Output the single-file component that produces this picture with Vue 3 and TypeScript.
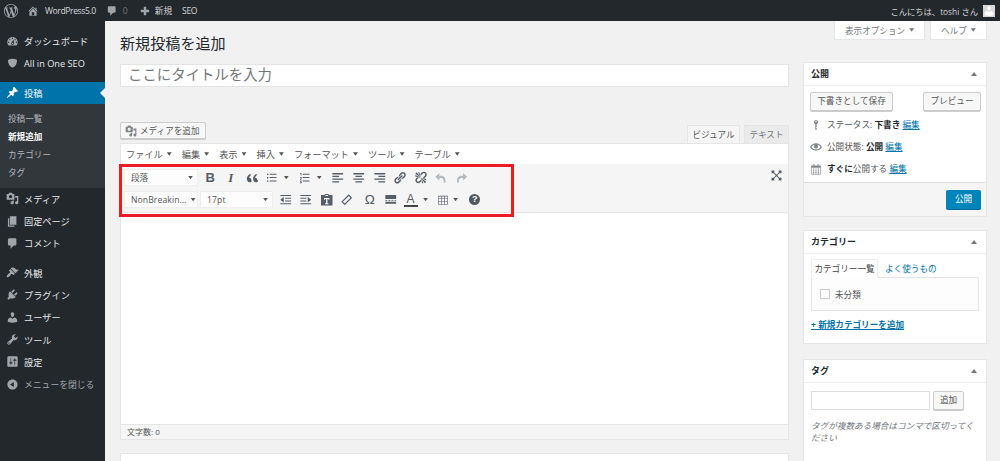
<script setup lang="ts">
const D: Record<string, string> = {
  wp: 'M20 10c0-5.51-4.49-10-10-10C4.48 0 0 4.49 0 10c0 5.52 4.48 10 10 10 5.51 0 10-4.48 10-10zM7.78 15.37L4.37 6.22c.55-.02 1.17-.08 1.17-.08.5-.06.44-1.13-.06-1.11 0 0-1.45.11-2.37.11-.18 0-.37 0-.58-.01C4.12 2.69 6.87 1.11 10 1.11c2.33 0 4.45.87 6.05 2.34-.68-.11-1.65.39-1.65 1.58 0 .74.45 1.36.9 2.1.35.61.55 1.36.55 2.46 0 1.49-1.4 5-1.4 5l-3.03-8.37c.54-.02.82-.17.82-.17.5-.05.44-1.25-.06-1.22 0 0-1.44.12-2.38.12-.87 0-2.33-.12-2.33-.12-.5-.03-.56 1.2-.06 1.22l.92.08 1.26 3.41zM17.41 10c.24-.64.74-1.87.43-4.25.7 1.29 1.05 2.71 1.05 4.25 0 3.29-1.73 6.24-4.4 7.78.97-2.59 1.94-5.2 2.92-7.78zM6.1 18.09C3.12 16.65 1.11 13.53 1.11 10c0-1.3.23-2.48.72-3.59C3.25 10.3 4.67 14.2 6.1 18.09zm4.03-6.63l2.58 6.98c-.86.29-1.76.45-2.71.45-.79 0-1.57-.11-2.29-.33.81-2.38 1.62-4.74 2.42-7.1z',
  home: 'M16 8.5l1.53 1.53-1.06 1.06L10 4.62l-6.47 6.47-1.06-1.06L10 2.5l4 4v-2h2v4zm-6-2.46l6 5.99V18H4v-5.97zM12 17v-5H8v5h4z',
  comment: 'M5 2h9c1.1 0 2 .9 2 2v7c0 1.1-.9 2-2 2h-2l-5 5v-5H5c-1.1 0-2-.9-2-2V4c0-1.1.9-2 2-2z',
  plus: 'M17 8v4h-5v5H8v-5H3V8h5V3h4v5h5z',
  dashboard: 'M3.76 16h12.48c1.1-1.37 1.76-3.11 1.76-5 0-4.42-3.58-8-8-8s-8 3.58-8 8c0 1.89.66 3.63 1.76 5zM10 4c.55 0 1 .45 1 1s-.45 1-1 1-1-.45-1-1 .45-1 1-1zM6 6c.55 0 1 .45 1 1s-.45 1-1 1-1-.45-1-1 .45-1 1-1zm8 0c.55 0 1 .45 1 1s-.45 1-1 1-1-.45-1-1 .45-1 1-1zm-5.37 5.55L12 7v6c0 1.1-.9 2-2 2s-2-.9-2-2c0-.57.24-1.08.63-1.45zM4 10c.55 0 1 .45 1 1s-.45 1-1 1-1-.45-1-1 .45-1 1-1zm12 0c.55 0 1 .45 1 1s-.45 1-1 1-1-.45-1-1 .45-1 1-1zm-5 3c0-.55-.45-1-1-1s-1 .45-1 1 .45 1 1 1 1-.45 1-1z',
  shield: 'M3 4.500c2-1.200 4.500-1.800 7-1.800s5 .6 7 1.800c0 5.500-2 9.500-7 12-5-2.500-7-6.500-7-12z',
  pin: 'M10.44 3.02l1.82-1.82 6.36 6.35-1.83 1.82c-1.05-.68-2.48-.57-3.41.36l-.75.75c-.92.93-1.04 2.35-.35 3.41l-1.83 1.82-2.41-2.41-2.8 2.79c-.42.42-3.38 2.71-3.8 2.29s1.86-3.39 2.28-3.81l2.79-2.79L4.1 9.36l1.83-1.82c1.05.69 2.48.57 3.4-.36l.75-.75c.93-.92 1.05-2.35.36-3.41z',
  media: 'M13 11V4c0-.55-.45-1-1-1h-1.67L9 1H5L3.67 3H2c-.55 0-1 .45-1 1v7c0 .55.45 1 1 1h10c.55 0 1-.45 1-1zM7 4.500c1.380 0 2.500 1.120 2.500 2.500S8.380 9.500 7 9.500 4.500 8.380 4.500 7 5.620 4.500 7 4.500zM14 6h5v10.500c0 1.380-1.120 2.500-2.500 2.500S14 17.880 14 16.500s1.120-2.500 2.500-2.500c.17 0 .34.02.5.05V9h-3V6zm-4 8.050V13h2v3.500c0 1.380-1.120 2.500-2.500 2.500S7 17.880 7 16.500 8.120 14 9.500 14c.17 0 .34.02.5.05z',
  page: 'M6 15V2h10v13H6zm-1 1h8v2H3V5h2v11z',
  appearance: 'M14.480 11.060L7.410 3.990l1.500-1.500c.5-.56 2.300-.47 3.510.32 1.210.8 1.430 1.280 2.910 2.100 1.180.64 2.450 1.260 4.450.85zm-.71.71L6.700 4.700 4.930 6.470c-.39.39-.39 1.020 0 1.410l1.060 1.060c.39.39.39 1.030 0 1.420-.6.6-1.430 1.110-2.210 1.690-.35.26-.7.53-1.010.84C1.430 14.230.4 16.080 1.400 17.070c.99 1 2.840-.03 4.180-1.360.31-.31.58-.66.85-1.020.57-.78 1.080-1.610 1.690-2.210.39-.39 1.020-.39 1.410 0l1.060 1.060c.39.39 1.020.39 1.410 0z',
  plugin: 'M13.110 4.360L9.870 7.600 8 5.730l3.240-3.240c.35-.34 1.050-.2 1.560.32.52.51.66 1.210.31 1.550zm-8 1.770l.91-1.120 9.010 9.010-1.190.84c-.71.71-2.630 1.160-3.820 1.160H6.140L4.900 17.260c-.59.59-1.540.59-2.120 0-.59-.58-.59-1.530 0-2.120l1.240-1.240v-3.880c0-1.130.4-3.190 1.090-3.890zm7.260 3.970l3.240-3.240c.34-.35 1.040-.21 1.550.31.52.51.66 1.210.31 1.550l-3.240 3.250z',
  user: 'M10 9.250c-2.270 0-2.730-3.440-2.730-3.440C7 4.020 7.820 2 9.970 2c2.160 0 2.980 2.020 2.710 3.810 0 0-.41 3.440-2.680 3.440zm0 2.570L12.720 10c2.390 0 4.520 2.330 4.520 4.530v2.490s-3.650 1.130-7.240 1.130c-3.650 0-7.240-1.130-7.240-1.130v-2.490c0-2.250 1.940-4.480 4.470-4.480z',
  tool: 'M16.680 9.770c-1.340 1.340-3.300 1.670-4.950.99l-5.410 6.520c-.99.99-2.590.99-3.580 0s-.99-2.590 0-3.570l6.520-5.420c-.68-1.650-.35-3.610.99-4.950 1.280-1.280 3.120-1.620 4.720-1.060l-2.890 2.890 2.820 2.820 2.860-2.870c.53 1.580.18 3.390-1.080 4.650zM3.810 16.210c.4.39 1.040.39 1.430 0 .4-.4.4-1.040 0-1.430-.39-.4-1.030-.4-1.430 0-.39.39-.39 1.030 0 1.430z',
  settings: 'M18 16V4c0-1.100-.9-2-2-2H4c-1.100 0-2 .9-2 2v12c0 1.100.9 2 2 2h12c1.100 0 2-.9 2-2zM8 11h1c.55 0 1 .45 1 1s-.45 1-1 1H8v1.500c0 .28-.22.5-.5.5s-.5-.22-.5-.5V13H6c-.55 0-1-.45-1-1s.45-1 1-1h1V5.500c0-.28.22-.5.5-.5s.5.22.5.5V11zm5-2h-1c-.55 0-1-.45-1-1s.45-1 1-1h1V5.500c0-.28.22-.5.5-.5s.5.22.5.5V7h1c.55 0 1 .45 1 1s-.45 1-1 1h-1v5.500c0 .28-.22.5-.5.5s-.5-.22-.5-.5V9z',
  collapse: 'M10 2.160c4.330 0 7.840 3.510 7.840 7.840s-3.510 7.840-7.840 7.840S2.160 14.330 2.160 10 5.710 2.160 10 2.160zm2 11.720V6.120L6.180 9.970z',
  key: 'M10 1.500C8 1.500 6.500 3 6.500 5c0 1.600 1 3 2.300 3.400V17l1.200 1.800 1.200-1.800v-2h-1v-1.500h1V8.400c1.300-.4 2.300-1.800 2.300-3.400 0-2-1.500-3.500-3.500-3.500zM10 3c.7 0 1.200.5 1.200 1.200S10.700 5.400 10 5.400s-1.200-.5-1.200-1.200S9.300 3 10 3z',
  eye: 'M19.700 9.400C17.700 6 14 3.900 10 3.900S2.300 6 .3 9.400L0 10l.3.6c2 3.400 5.700 5.500 9.700 5.500s7.700-2.100 9.700-5.500l.3-.6-.3-.6zM10 14.100c-3.100 0-6-1.600-7.700-4.100C3.600 8 5.700 6.600 8 6.100c-.9.6-1.500 1.700-1.500 2.900 0 1.900 1.600 3.500 3.500 3.500s3.500-1.600 3.500-3.500c0-1.200-.6-2.300-1.500-2.900 2.300.5 4.400 1.900 5.700 3.900-1.700 2.500-4.600 4.100-7.700 4.100z',
  calendar: 'M15 4h3v15H2V4h3V3c0-.41.15-.76.44-1.060.29-.29.65-.44 1.060-.44s.77.15 1.060.44c.29.3.44.65.44 1.060v1h4V3c0-.41.15-.76.44-1.060.29-.29.65-.44 1.060-.44s.77.15 1.060.44c.29.3.44.65.44 1.060v1zM6 5h1V3c0-.14-.05-.26-.15-.35-.09-.1-.21-.15-.35-.15s-.26.05-.35.15c-.1.09-.15.21-.15.35v2zm7 0h1V3c0-.14-.05-.26-.15-.35-.09-.1-.21-.15-.35-.15s-.26.05-.35.15c-.1.09-.15.21-.15.35v2zm4 13V8H3v10h14zM7 9v2H5V9h2zm2 0h2v2H9V9zm4 2V9h2v2h-2zm-6 1v2H5v-2h2zm2 0h2v2H9v-2zm4 2v-2h2v2h-2zm-6 1v2H5v-2h2zm4 2H9v-2h2v2zm4 0h-2v-2h2v2z',
  quote: 'M9.490 13.220c0-.74-.2-1.380-.61-1.900-.62-.78-1.830-.88-2.530-.72-.29-1.650 1.110-3.750 2.920-4.650L7.400 4.270c-2.590 1.270-5.110 4.510-4.660 8.020.29 2.260 1.350 4.440 4.180 4.440 1.160 0 1.860-.38 2.460-.95.48-.56.11-1.500.11-2.560zm8.740 0c0-.74-.2-1.380-.61-1.900-.63-.78-1.830-.88-2.530-.72-.29-1.650 1.110-3.750 2.920-4.650l-1.370-1.680c-2.590 1.270-5.100 4.510-4.650 8.020.29 2.260 1.350 4.440 4.170 4.440 1.160 0 1.860-.38 2.460-.95.48-.56.61-1.500.61-2.560z',
  ul: 'M3 4h2v2H3zM7 4h10v1.500H7zM3 9h2v2H3zM7 9h10v1.500H7zM3 14h2v2H3zM7 14h10v1.500H7z',
  ol: 'M3 3h2v3.500H4V4H3zM7 4h10v1.500H7zM3 9h2.500v2.500H4V13h1.500v1H3v-3h1.500v-1H3zM7 9h10v1.500H7zM3 15h2.500v3H3v-1h1.500v-.5H3zM7 14h10v1.500H7z',
  left: 'M2 3h16v2H2zM2 7h10v2H2zM2 11h16v2H2zM2 15h10v2H2z',
  center: 'M2 3h16v2H2zM5 7h10v2H5zM2 11h16v2H2zM5 15h10v2H5z',
  right: 'M2 3h16v2H2zM8 7h10v2H8zM2 11h16v2H2zM8 15h10v2H8z',
  link: 'M17.740 2.760c1.680 1.690 1.680 4.410 0 6.100l-1.530 1.520c-1.120 1.120-2.700 1.470-4.140 1.090l2.620-2.610.76-.77.76-.76c.84-.84.84-2.200 0-3.040-.84-.85-2.200-.85-3.040 0l-.77.76-3.380 3.380c-.37-1.440-.02-3.020 1.100-4.140l1.520-1.530c1.690-1.680 4.420-1.680 6.100 0zM8.590 13.430l5.340-5.340c.42-.42.42-1.100 0-1.520-.44-.43-1.130-.39-1.530 0l-5.330 5.340c-.42.42-.42 1.100 0 1.520.44.43 1.130.39 1.520 0zm-.76 2.290l4.140-4.150c.38 1.440.03 3.020-1.090 4.140l-1.520 1.530c-1.690 1.680-4.410 1.680-6.100 0-1.680-1.680-1.680-4.420 0-6.100l1.530-1.520c1.120-1.120 2.700-1.470 4.140-1.100l-4.140 4.150c-.85.84-.85 2.200 0 3.050.84.84 2.200.84 3.040 0z',
  unlink: 'M17.740 2.260c1.680 1.690 1.680 4.410 0 6.100l-1.530 1.520c-.32.33-.69.58-1.080.77L13 10l1.690-1.640.76-.77.76-.76c.84-.84.84-2.200 0-3.040-.84-.85-2.200-.85-3.040 0l-.77.76-.76.76L10 7l-.65-2.140c.19-.38.44-.75.77-1.070l1.520-1.530c1.690-1.680 4.420-1.680 6.100 0zM2 4l8 6-6-8zm4-2l4 8-2-8H6zM2 6l8 4-8-2V6zm7.360 7.690L10 13l.74 2.350-1.380 1.390c-1.690 1.680-4.410 1.680-6.100 0-1.680-1.680-1.680-4.420 0-6.100l1.390-1.380L7 10l-.69.64-1.520 1.530c-.85.84-.85 2.200 0 3.040.84.85 2.200.85 3.040 0zM18 16l-8-6 6 8zm-4 2l-4-8 2 8h2zm4-4l-8-4 8 2v2z',
  undo: 'M8 3L2 8.500 8 14v-3.500h2c3 0 4.500 2 4.500 6.500H17c.5-6-1.500-10-7-10H8z',
  redo: 'M12 3l6 5.500L12 14v-3.500h-2c-3 0-4.500 2-4.500 6.500H3c-.5-6 1.500-10 7-10h2z',
  outdent: 'M2 3h16v1.500H2zM9 7h9v1.500H9zM9 11h9v1.500H9zM2 15h16v1.500H2zM7 6v8L2 10z',
  indent: 'M2 3h16v1.500H2zM2 7h9v1.500H2zM2 11h9v1.500H2zM2 15h16v1.500H2zM13 6v8l5-4z',
  paste: 'M7 3V1.500h6V3h5.500v15.500h-17V3zM8 3v1.500h4V3zM6 7.500V10h1.500V9H9v6H7.500v1.500h5V15H11V9h1.500v1H14V7.500z',
  eraser: 'M13 2l5 5L7 18l-5-5zM13 4.400L4.400 13 7 15.600 15.600 7z',
  hr: 'M2 3h16v6H2zM2 10.500h3v1H2zM6.500 10.500h3v1h-3zM11 10.500h3v1h-3zM15.500 10.500H18v1h-2.500zM2 13h16v3H2z',
  table: 'M2 3h16v15H2zM3 4v3h4V4zM8 4v3h4V4zM13 4v3h4V4zM3 8v4h4V8zM8 8v4h4V8zM13 8v4h4V8zM3 13v4h4v-4zM8 13v4h4v-4zM13 13v4h4v-4z',
  expand: 'M1 1h5v5H1zM14 1h5v5h-5zM1 14h5v5H1zM14 14h5v5h-5zM5 6l1-1 4 3.500L14 5l1 1-3.500 4 3.500 4-1 1-4-3.500L6 15l-1-1 3.500-4z',
}

const menuTop = [
  { icon: 'dashboard', label: 'ダッシュボード' },
  { icon: 'shield', label: 'All in One SEO' },
]
const subItems = [
  { label: '投稿一覧', on: false },
  { label: '新規追加', on: true },
  { label: 'カテゴリー', on: false },
  { label: 'タグ', on: false },
]
const menuMid = [
  { icon: 'media', label: 'メディア' },
  { icon: 'page', label: '固定ページ' },
  { icon: 'comment', label: 'コメント' },
]
const menuLow = [
  { icon: 'appearance', label: '外観' },
  { icon: 'plugin', label: 'プラグイン' },
  { icon: 'user', label: 'ユーザー' },
  { icon: 'tool', label: 'ツール' },
  { icon: 'settings', label: '設定' },
]
const menubar = ['ファイル', '編集', '表示', '挿入', 'フォーマット', 'ツール', 'テーブル']
const row1 = [
  { k: 'quote' }, { k: 'ul', split: true }, { k: 'ol', split: true }, { k: 'left' }, { k: 'center' }, { k: 'right' },
  { k: 'link' }, { k: 'unlink' }, { k: 'undo', dim: true }, { k: 'redo', dim: true },
]
const row2a = [{ k: 'outdent' }, { k: 'indent' }, { k: 'paste' }, { k: 'eraser' }]
</script>

<template>
  <div class="page">
    <header class="adminbar">
      <svg class="ab-logo" viewBox="0 0 20 20"><path :d="D.wp" /></svg>
      <svg class="ab-ico home" viewBox="0 0 20 20"><path :d="D.home" /></svg>
      <span class="ab-t site">WordPress5.0</span>
      <svg class="ab-ico cm" viewBox="0 0 20 20"><path :d="D.comment" /></svg>
      <span class="ab-t zero">0</span>
      <svg class="ab-ico pl" viewBox="0 0 20 20"><path :d="D.plus" /></svg>
      <span class="ab-t new">新規</span>
      <span class="ab-t seo">SEO</span>
      <span class="ab-t hello">こんにちは、toshi さん</span>
      <span class="avatar">
        <svg viewBox="0 0 20 20"><path :d="D.user" /></svg>
      </span>
    </header>

    <div class="body">
      <nav class="side">
        <div v-for="m in menuTop" :key="m.label" class="mi">
          <svg viewBox="0 0 20 20"><path :d="D[m.icon]" /></svg><span>{{ m.label }}</span>
        </div>
        <div class="mi active">
          <svg viewBox="0 0 20 20"><path :d="D.pin" /></svg><span>投稿</span>
          <i class="notch"></i>
        </div>
        <div class="sub">
          <div v-for="s in subItems" :key="s.label" class="si" :class="{ on: s.on }">{{ s.label }}</div>
        </div>
        <div v-for="m in menuMid" :key="m.label" class="mi">
          <svg viewBox="0 0 20 20"><path :d="D[m.icon]" /></svg><span>{{ m.label }}</span>
        </div>
        <div class="sep"></div>
        <div v-for="m in menuLow" :key="m.label" class="mi">
          <svg viewBox="0 0 20 20"><path :d="D[m.icon]" /></svg><span>{{ m.label }}</span>
        </div>
        <div class="mi closer">
          <svg viewBox="0 0 20 20"><path :d="D.collapse" /></svg><span>メニューを閉じる</span>
        </div>
      </nav>

      <main class="main">
        <h1>新規投稿を追加</h1>
        <div class="title">ここにタイトルを入力</div>
        <div class="edhead">
          <div class="mediabtn">
            <svg viewBox="0 0 20 20"><path :d="D.media" /></svg>メディアを追加
          </div>
          <div class="tabs">
            <span class="tab cur">ビジュアル</span>
            <span class="tab">テキスト</span>
          </div>
        </div>
        <div class="editor">
          <div class="menubar">
            <span v-for="m in menubar" :key="m" class="mb">{{ m }}<i class="caret"></i></span>
          </div>
          <div class="toolbar">
            <div class="tbrow">
              <div class="sel w74">段落<i class="caret"></i></div>
              <span class="tb b">B</span>
              <span class="tb it">I</span>
              <span v-for="b in row1" :key="b.k" class="tb" :class="{ split: b.split, dim: b.dim }">
                <svg viewBox="0 0 20 20"><path :d="D[b.k]" fill-rule="evenodd" /></svg>
                <i v-if="b.split" class="caret"></i>
              </span>
            </div>
            <div class="tbrow">
              <div class="sel w74 font">NonBreakin...<i class="caret"></i></div>
              <div class="sel w73 font">17pt<i class="caret"></i></div>
              <span v-for="b in row2a" :key="b.k" class="tb">
                <svg viewBox="0 0 20 20"><path :d="D[b.k]" fill-rule="evenodd" /></svg>
              </span>
              <span class="tb om">Ω</span>
              <span class="tb"><svg viewBox="0 0 20 20"><path :d="D.hr" /></svg></span>
              <span class="tb split acol"><span class="aw">A</span><i class="caret"></i></span>
              <span class="tb split tw">
                <svg viewBox="0 0 20 20"><path :d="D.table" fill-rule="evenodd" /></svg>
                <i class="caret"></i>
              </span>
              <span class="tb"><span class="help">?</span></span>
            </div>
            <svg class="expand" viewBox="0 0 20 20"><path :d="D.expand" /></svg>
          </div>
          <div class="area"></div>
          <div class="status">文字数: 0</div>
          <div class="redbox"></div>
        </div>
        <div class="nextbox"></div>
      </main>

      <aside class="right">
        <div class="opts">
          <span class="opt o1">表示オプション<i class="caret up"></i></span>
          <span class="opt o2">ヘルプ<i class="caret up"></i></span>
        </div>

        <section class="box pub">
          <div class="bh"><b>公開</b><i class="tri"></i></div>
          <div class="pubtop">
            <span class="btn">下書きとして保存</span>
            <span class="btn">プレビュー</span>
          </div>
          <div class="st">
            <svg viewBox="0 0 20 20"><path :d="D.key" fill-rule="evenodd" /></svg>
            <span>ステータス: <b>下書き</b> <a>編集</a></span>
          </div>
          <div class="st">
            <svg viewBox="0 0 20 20"><path :d="D.eye" /></svg>
            <span>公開状態: <b>公開</b> <a>編集</a></span>
          </div>
          <div class="st">
            <svg viewBox="0 0 20 20"><path :d="D.calendar" /></svg>
            <span><b>すぐに</b>公開する <a>編集</a></span>
          </div>
          <div class="pubfoot"><span class="primary">公開</span></div>
        </section>

        <section class="box cat">
          <div class="bh"><b>カテゴリー</b><i class="tri"></i></div>
          <div class="cattabs">
            <span class="ct cur">カテゴリー一覧</span>
            <a class="ct">よく使うもの</a>
          </div>
          <div class="catpanel"><i class="check"></i>未分類</div>
          <a class="addcat">+ 新規カテゴリーを追加</a>
        </section>

        <section class="box tag">
          <div class="bh"><b>タグ</b><i class="tri"></i></div>
          <div class="tagrow">
            <span class="taginput"></span>
            <span class="btn add">追加</span>
          </div>
          <p class="hint">タグが複数ある場合はコンマで区切ってください</p>
        </section>
      </aside>
    </div>
  </div>
</template>

<style>
html, body { margin: 0; background: #f1f1f1; overflow: hidden; }
</style>

<style scoped>
.page {
  width: 1000px; height: 461px; overflow: hidden; display: flex; flex-direction: column;
  font-family: "Open Sans", "Noto Sans CJK JP", sans-serif; color: #444; font-size: 8.6px;
}
svg { fill: currentColor; display: block; flex: none; }
i { display: block; font-style: normal; }

.adminbar { height: 21px; flex: none; background: #23282d; display: flex; align-items: center; color: #ccc; padding: 0 5px 0 4px; }
.ab-logo { width: 14px; height: 14px; color: #a0a5aa; }
.ab-ico { width: 12px; height: 12px; color: #a0a5aa; }
.ab-t { font-size: 8.6px; white-space: nowrap; color: #d5d6d7; }
.home { margin-left: 9px; }
.site { margin-left: 6px; letter-spacing: -.4px; }
.cm { margin-left: 10px; }
.zero { margin-left: 5px; color: #777; }
.pl { margin-left: 11px; }
.new { margin-left: 4px; }
.seo { margin-left: 10px; letter-spacing: -.3px; }
.hello { margin-left: auto; font-size: 8.3px; }
.avatar { width: 12px; height: 12px; margin-left: 5px; background: #d8d8d8; color: #fff; }
.avatar svg { width: 12px; height: 12px; }

.body { flex: 1; display: flex; min-height: 0; }
.side { width: 105px; flex: none; background: #23282d; padding-top: 9px; color: #eee; }
.mi { height: 22.3px; display: flex; align-items: center; font-size: 9.2px; position: relative; white-space: nowrap; color: #e6e7e8; }
.mi svg { width: 13px; height: 13px; margin: 0 5px 0 6px; color: #a0a5aa; }
.mi.active { background: #0073aa; color: #fff; margin-top: 7px; }
.mi.active svg { color: #fff; }
.notch { position: absolute; right: 0; top: 6px; border: 5px solid transparent; border-right-color: #f1f1f1; border-left-width: 0; }
.sub { background: #32373c; padding: 6px 0 5px; }
.si { height: 18.2px; line-height: 18.2px; padding-left: 8px; font-size: 8.6px; color: #b4b9be; }
.si.on { color: #fff; font-weight: 700; }
.sep { height: 7px; }
.closer { color: #a0a5aa; font-size: 8.8px; }

.main { width: 669px; margin-left: 15px; padding-top: 12px; flex: none; }
h1 { margin: 0; font-size: 15.1px; line-height: 20px; font-weight: 400; color: #23282d; height: 20px; }
.title {
  margin-top: 11px; height: 23px; box-sizing: border-box; background: #fff; border: 1px solid #e4e4e4;
  font-size: 14.4px; line-height: 20px; color: #72777c; padding-left: 7px;
}
.edhead { margin-top: 35px; height: 21px; display: flex; justify-content: space-between; align-items: flex-end; }
.mediabtn {
  height: 17px; width: 86px; box-sizing: border-box; margin-bottom: 4px; border: 1px solid #ccc; border-radius: 2px; background: #f7f7f7;
  display: flex; align-items: center; font-size: 8.6px; color: #555; padding-left: 4px; box-shadow: 0 1px 0 #ccc;
}
.mediabtn svg { width: 12px; height: 12px; margin-right: 3px; color: #82878c; }
.tabs { display: flex; gap: 4px; }
.tab { height: 18px; line-height: 18px; font-size: 8.6px; color: #72777c; background: #ebebeb; text-align: center; width: 45px; box-sizing: border-box; border: 1px solid #e5e5e5; border-bottom: 0; }
.tab.cur { width: 53px; background: #f5f5f5; color: #555; }

.editor { position: relative; height: 297px; box-sizing: border-box; border: 1px solid #e5e5e5; display: flex; flex-direction: column; background: #fff; }
.menubar { height: 20px; background: #fff; display: flex; align-items: center; padding-left: 5px; flex: none; }
.mb { display: flex; align-items: center; font-size: 9.2px; color: #555; margin-right: 10px; }
.caret { width: 5px; height: 3.500px; background: #555; clip-path: polygon(0 0, 100% 0, 50% 100%); margin-left: 4px; flex: none; }
.toolbar { height: 43px; background: #f5f5f5; position: relative; flex: none; border-bottom: 1px solid #e5e5e5; padding: 5px 0 0 3px; box-sizing: content-box; }
.tbrow { display: flex; align-items: center; height: 17px; margin-bottom: 5px; }
.sel { height: 17px; box-sizing: border-box; background: #fdfdfd; display: flex; align-items: center; justify-content: space-between; padding: 0 4px 0 6px; font-size: 8.6px; color: #555; margin-right: 2px; border: 1px solid #eee; }
.w74 { width: 74px; }
.w73 { width: 73px; }
.font { letter-spacing: .1px; }
.tb { width: 20.6px; height: 17px; display: flex; align-items: center; justify-content: center; color: #555d66; font-family: "Liberation Sans", sans-serif; flex: none; }
.tb svg { width: 13.500px; height: 13.500px; }
.tb.split { width: 33px; justify-content: flex-start; padding-left: 3px; box-sizing: border-box; }
.tb.split .caret { margin-left: 5.500px; }
.tb.split.tw { width: 31px; }
.tb.split.tw svg { width: 12px; height: 12px; }
.tb.split.tw .caret { margin-left: 4.500px; }
.tb.dim { color: #b4b9be; }
.b { font-weight: 700; font-size: 13px; }
.it { font-style: italic; font-weight: 700; font-size: 13px; font-family: "Liberation Serif", serif; }
.om { font-size: 13.500px; margin-left: 2px; }
.aw { font-size: 12px; line-height: 12px; width: 14px; text-align: center; border-bottom: 2px solid #444; }
.help { width: 11px; height: 11px; border-radius: 50%; background: #50575e; color: #fff; font-size: 9px; font-weight: 700; line-height: 11px; text-align: center; }
.expand { position: absolute; right: 6.500px; top: 5.500px; width: 11px; height: 11px; color: #555d66; }
.area { flex: 1; background: #fff; }
.status { height: 14px; line-height: 14px; background: #f5f5f5; border-top: 1px solid #e5e5e5; font-size: 8px; color: #555; padding-left: 6px; flex: none; }
.redbox { position: absolute; left: -2px; top: 20px; width: 395px; height: 53px; box-sizing: border-box; border: 3px solid #ed1c24; }
.nextbox { margin-top: 13px; height: 40px; background: #fff; border: 1px solid #e5e5e5; }

.right { width: 184px; margin-left: 14px; flex: none; }
.opts { height: 19px; display: flex; justify-content: flex-end; gap: 5px; }
.opt { height: 19px; box-sizing: border-box; background: #fff; border: 1px solid #e5e5e5; border-top: 0; display: flex; align-items: center; font-size: 8.6px; color: #72777c; padding-left: 10px; }
.o1 { width: 91px; }
.o2 { width: 57px; }
.caret.up { margin-left: 4px; background: #72777c; }
.box { background: #fff; border: 1px solid #e5e5e5; box-sizing: border-box; }
.pub { margin-top: 22px; height: 155px; margin-bottom: 13px; }
.cat { height: 114px; margin-bottom: 15px; }
.tag { height: 110px; }
.bh { height: 22.500px; border-bottom: 1px solid #eee; display: flex; align-items: center; justify-content: space-between; padding: 0 9px 0 7px; font-size: 9px; color: #23282d; box-sizing: border-box; }
.tri { width: 0; height: 0; border: 3px solid transparent; border-bottom: 4px solid #72777c; border-top: 0; }
.btn { height: 19px; box-sizing: border-box; line-height: 17px; background: #f7f7f7; border: 1px solid #ccc; border-radius: 2px; box-shadow: 0 1px 0 #ccc; color: #555; font-size: 8.6px; text-align: center; display: block; }
.pubtop { display: flex; justify-content: space-between; padding: 6px 5px 0 6px; }
.pubtop .btn:first-child { width: 83px; }
.pubtop .btn:last-child { width: 58px; }
.st { height: 22px; display: flex; align-items: center; padding-left: 6px; color: #555; font-size: 8.6px; white-space: nowrap; }
.st:nth-of-type(3) { margin-top: 3px; }
.st svg { width: 12px; height: 12px; margin-right: 5px; color: #82878c; }
.st b { color: #23282d; }
a { color: #0073aa; text-decoration: underline; }
.pubfoot { height: 34px; margin-top: 2px; background: #f5f5f5; border-top: 1px solid #ddd; display: flex; justify-content: flex-end; align-items: center; padding-right: 5px; box-sizing: border-box; }
.primary { width: 35px; height: 19px; line-height: 19px; text-align: center; background: #0085ba; color: #fff; border-radius: 2px; font-size: 8.6px; box-shadow: 0 1px 0 #006799; }
.cattabs { display: flex; padding: 5px 0 0 7px; height: 18px; box-sizing: content-box; align-items: flex-end; }
.ct { font-size: 8.6px; height: 18px; line-height: 18px; }
.ct.cur { width: 67px; box-sizing: border-box; background: #fff; border: 1px solid #eee; border-bottom: 0; text-align: center; color: #444; position: relative; z-index: 1; margin-bottom: -1px; height: 19px; }
a.ct { margin-left: 7px; text-decoration: none; line-height: 20px; }
.catpanel { margin: 0 7px; height: 34px; box-sizing: border-box; border: 1px solid #e5e5e5; background: #fdfdfd; display: flex; align-items: center; padding: 1px 0 0 8px; font-size: 8.6px; color: #555; }
.check { width: 10px; height: 10px; box-sizing: border-box; border: 1px solid #ccc; background: #fff; margin-right: 5px; }
.addcat { display: block; margin: 7px 0 0 7px; font-size: 8.6px; font-weight: 700; }
.tagrow { display: flex; padding: 8px 7px 0; gap: 3px; }
.taginput { width: 119px; height: 19px; box-sizing: border-box; border: 1px solid #ddd; background: #fff; display: block; }
.add { width: 31px; }
.hint { margin: 10px 7px 0; font-size: 8.6px; line-height: 12.5px; color: #72777c; font-style: italic; }
</style>
